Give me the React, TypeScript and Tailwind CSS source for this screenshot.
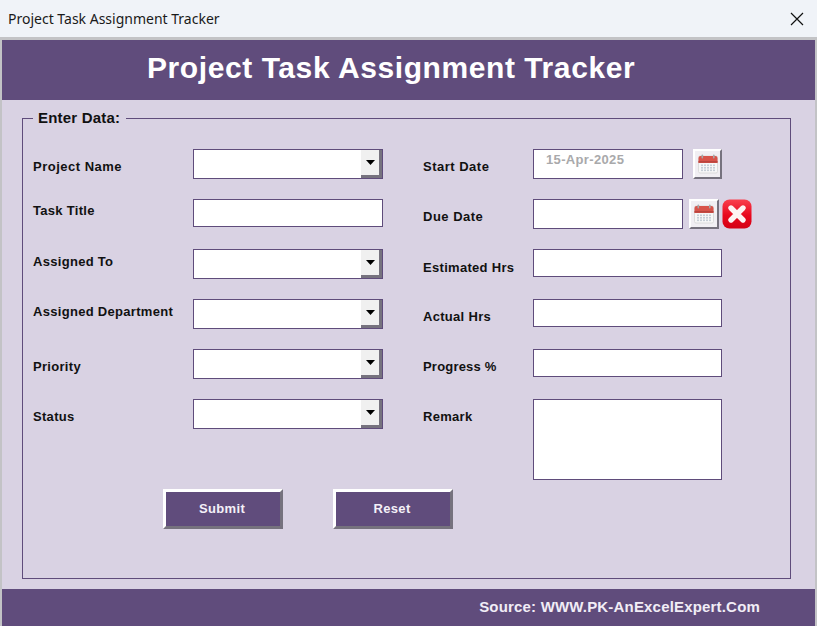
import React from "react";

const arial = "font-['Liberation_Sans',Arial,sans-serif]";

function CalendarIcon() {
  return (
    <svg width="24" height="22" viewBox="0 0 24 22" fill="none">
      <rect x="2.5" y="3" width="19" height="17" rx="1.5" fill="#f7f7f7" stroke="#dcdcdc" />
      <path d="M2.500 10V5a2 2 0 0 1 2-2h15a2 2 0 0 1 2 2v5z" fill="#d8534a" />
      <rect x="2.5" y="8" width="19" height="1.6" fill="#b9453e" />
      <rect x="5.5" y="1.5" width="1.6" height="4" rx="0.8" fill="#a8a8a8" />
      <rect x="17" y="1.5" width="1.6" height="4" rx="0.8" fill="#a8a8a8" />
      {[11.5, 14, 16.5].map((y) =>
        [5, 8, 11, 14, 17].map((x) => (
          <rect key={`${x}-${y}`} x={x} y={y} width="2" height="1.6" fill="#c6ced6" />
        ))
      )}
    </svg>
  );
}

function CalendarButton({ size }: { size: string }) {
  return (
    <button className={`flex h-[30px] shrink-0 items-center justify-center border-2 border-t-white border-l-white border-r-[#76727e] border-b-[#76727e] bg-[#f1eff3] ${size}`}>
      <CalendarIcon />
    </button>
  );
}

function CloseRedIcon() {
  return (
    <svg width="30" height="30" viewBox="0 0 30 30" className="shrink-0">
      <defs>
        <linearGradient id="redgloss" x1="0" y1="0" x2="0" y2="1">
          <stop offset="0" stopColor="#f9404e" />
          <stop offset="0.55" stopColor="#e8071d" />
          <stop offset="1" stopColor="#d40014" />
        </linearGradient>
      </defs>
      <rect x="0.5" y="0.5" width="29" height="29" rx="7" fill="url(#redgloss)" />
      <path d="M9 9 21 21M21 9 9 21" stroke="#fdf3f3" strokeWidth="5.4" strokeLinecap="round" />
    </svg>
  );
}

function ComboBox() {
  return (
    <div className="flex h-[30px] w-[190px] items-stretch border border-[#5f4c7b] bg-white">
      <div className="flex-1" />
      <div className="flex w-[21px] items-center justify-center border-r-[3px] border-b-[3px] border-r-[#76727e] border-b-[#76727e] bg-[#f0f0f0]">
        <svg width="9" height="5" viewBox="0 0 9 5">
          <path d="M0 0h9L4.500 5z" fill="#000" />
        </svg>
      </div>
    </div>
  );
}

function TextBox({ className, children }: { className: string; children?: React.ReactNode }) {
  return <div className={`border border-[#5f4c7b] bg-white ${className}`}>{children}</div>;
}

function Label({ text, className }: { text: string; className: string }) {
  return <div className={`text-[13px] leading-[16px] font-bold text-[#111] ${className}`}>{text}</div>;
}

function FormButton({ text }: { text: string }) {
  return (
    <button className="flex h-[40px] w-[120px] items-center justify-center border-[3px] border-t-white border-l-white border-r-[#76727e] border-b-[#76727e] bg-[#604c7c] pr-[2px] text-[13px] font-bold tracking-[0.35px] text-[#f4f0f8]">
      {text}
    </button>
  );
}

export default function App() {
  return (
    <div className={`flex h-[626px] w-[817px] flex-col overflow-hidden bg-[#f0f3f8] ${arial}`}>
      <header className="flex h-[37px] shrink-0 items-center justify-between pr-[13px] pl-[8px]">
        <span className="font-['Noto_Sans',sans-serif] text-[14px] text-[#1a1a1a]">Project Task Assignment Tracker</span>
        <svg width="14" height="14" viewBox="0 0 14 14">
          <path d="M1 1 13 13M13 1 1 13" stroke="#111" strokeWidth="1.2" />
        </svg>
      </header>
      <div className="flex min-h-0 flex-1 flex-col border-t-[3px] border-r-2 border-l-2 border-[#c3c3c6] bg-[#d9d2e3]">
        <div className="flex h-[60px] shrink-0 items-center bg-[#604c7c] pb-[6px] pl-[145px] text-[30px] font-bold tracking-[0.58px] text-white">
          Project Task Assignment Tracker
        </div>
        <main className="flex min-h-0 flex-1 flex-col pt-[9px] pr-[24px] pb-[10px] pl-[20px]">
          <fieldset className="flex-1 border border-[#5f4c7b] pt-[22px] pl-[10px]">
            <legend className="ml-[0px] pr-[6px] pl-[5px] text-[15px] leading-[18px] font-bold tracking-[0.2px] text-[#111]">
              Enter Data:
            </legend>
            <div className="flex gap-[40px]">
              <div className="flex w-[350px] flex-col gap-[20px]">
                <div className="flex h-[30px] justify-between">
                  <Label text="Project Name" className="mt-[10px] tracking-[0.5px]" />
                  <ComboBox />
                </div>
                <div className="flex h-[30px] justify-between">
                  <Label text="Task Title" className="mt-[4px] tracking-[0.3px]" />
                  <TextBox className="h-[28px] w-[190px]" />
                </div>
                <div className="flex h-[30px] justify-between">
                  <Label text="Assigned To" className="mt-[5px] tracking-[0.3px]" />
                  <ComboBox />
                </div>
                <div className="flex h-[30px] justify-between">
                  <Label text="Assigned Department" className="mt-[5px] tracking-[0.3px]" />
                  <ComboBox />
                </div>
                <div className="flex h-[30px] justify-between">
                  <Label text="Priority" className="mt-[10px] tracking-[0.3px]" />
                  <ComboBox />
                </div>
                <div className="flex h-[30px] justify-between">
                  <Label text="Status" className="mt-[10px] tracking-[0.3px]" />
                  <ComboBox />
                </div>
              </div>
              <div className="flex flex-col gap-[20px]">
                <div className="flex h-[30px]">
                  <Label text="Start Date" className="mt-[10px] w-[110px] tracking-[0.5px]" />
                  <TextBox className="h-[30px] w-[150px] pt-[1px] pl-[12px] text-[13px] leading-[17px] font-bold tracking-[0.35px] text-[#a9a9ab]">15-Apr-2025</TextBox>
                  <div className="ml-[10px]">
                    <CalendarButton size="w-[29px]" />
                  </div>
                </div>
                <div className="flex h-[30px]">
                  <Label text="Due Date" className="mt-[10px] w-[110px] tracking-[0.5px]" />
                  <TextBox className="h-[30px] w-[150px]" />
                  <div className="mr-[3px] ml-[6px]">
                    <CalendarButton size="w-[30px]" />
                  </div>
                  <CloseRedIcon />
                </div>
                <div className="flex h-[30px]">
                  <Label text="Estimated Hrs" className="mt-[11px] w-[110px] tracking-[0.3px]" />
                  <TextBox className="h-[28px] w-[189px]" />
                </div>
                <div className="flex h-[30px]">
                  <Label text="Actual Hrs" className="mt-[10px] w-[110px] tracking-[0.3px]" />
                  <TextBox className="h-[28px] w-[189px]" />
                </div>
                <div className="flex h-[30px]">
                  <Label text="Progress %" className="mt-[10px] w-[110px] tracking-[0.2px]" />
                  <TextBox className="h-[28px] w-[189px]" />
                </div>
                <div className="flex h-[81px]">
                  <Label text="Remark" className="mt-[10px] w-[110px] tracking-[0.3px]" />
                  <TextBox className="h-[81px] w-[189px]" />
                </div>
              </div>
            </div>
            <div className="mt-[9px] ml-[130px] flex gap-[50px]">
              <FormButton text="Submit" />
              <FormButton text="Reset" />
            </div>
          </fieldset>
        </main>
        <footer className="flex h-[37px] shrink-0 items-center justify-end bg-[#604c7c] pr-[55px] text-[15px] font-bold tracking-[0.18px] text-[#f1edf6]">
          Source: WWW.PK-AnExcelExpert.Com
        </footer>
      </div>
    </div>
  );
}
